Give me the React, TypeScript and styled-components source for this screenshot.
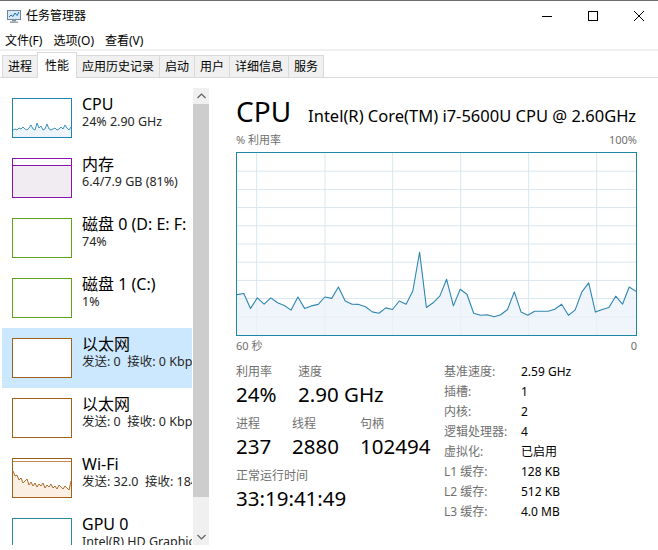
import styled, { createGlobalStyle } from "styled-components";

const GlobalStyle = createGlobalStyle`
  html, body {
    margin: 0;
    padding: 0;
    background: #ffffff;
    overflow: hidden;
  }
  body {
    font-family: "Noto Sans", "Noto Sans CJK SC", sans-serif;
    color: #000;
  }
`;

const cpuHistory = [
  22.2, 22.8, 14.6, 20.4, 16.9, 20.4, 17.7, 16.2, 13.7, 20.9, 14.6, 16.0, 16.8,
  20.9, 20.1, 26.4, 18.6, 16.9, 16.8, 15.5, 12.7, 11.9, 14.9, 14.0, 18.7, 16.9,
  24.2, 45.5, 15.1, 17.7, 21.5, 30.6, 16.0, 25.1, 22.4, 11.9, 10.8, 11.1, 10.0,
  11.1, 14.0, 23.7, 12.7, 10.8, 13.1, 13.1, 13.1, 14.2, 16.9, 10.8, 13.7, 23.7,
  28.6, 12.6, 14.0, 15.1, 21.3, 16.9, 26.4, 24.0,
];

const gridX = [19.7, 88, 155.7, 223.7, 291.7, 359.7];

type Kind = "cpu" | "mem" | "disk" | "eth" | "wifi" | "gpu";

const resources: { kind: Kind; name: string; sub: string; selected?: boolean }[] = [
  { kind: "cpu", name: "CPU", sub: "24% 2.90 GHz" },
  { kind: "mem", name: "内存", sub: "6.4/7.9 GB (81%)" },
  { kind: "disk", name: "磁盘 0 (D: E: F:", sub: "74%" },
  { kind: "disk", name: "磁盘 1 (C:)", sub: "1%" },
  { kind: "eth", name: "以太网", sub: "发送: 0  接收: 0 Kbps", selected: true },
  { kind: "eth", name: "以太网", sub: "发送: 0  接收: 0 Kbps" },
  { kind: "wifi", name: "Wi-Fi", sub: "发送: 32.0  接收: 184 Kbps" },
  { kind: "gpu", name: "GPU 0", sub: "Intel(R) HD Graphics 5500" },
];

const borderColors: Record<Kind, string> = {
  cpu: "#1f84b4",
  mem: "#8b12ae",
  disk: "#5ea21c",
  eth: "#a2601a",
  wifi: "#a2601a",
  gpu: "#2a8a9c",
};

const tabs = ["进程", "性能", "应用历史记录", "启动", "用户", "详细信息", "服务"];

const rightStats = [
  ["基准速度:", "2.59 GHz"],
  ["插槽:", "1"],
  ["内核:", "2"],
  ["逻辑处理器:", "4"],
  ["虚拟化:", "已启用"],
  ["L1 缓存:", "128 KB"],
  ["L2 缓存:", "512 KB"],
  ["L3 缓存:", "4.0 MB"],
];

const Window = styled.div`
  width: 662px;
  height: 550px;
  box-sizing: border-box;
  border-top: 1px solid #6e6e6e;
  display: flex;
  flex-direction: column;
  overflow: hidden;
`;

const TitleBar = styled.div`
  height: 29px;
  display: flex;
  align-items: center;
  flex-shrink: 0;
`;

const AppIcon = styled.svg`
  margin-left: 6px;
  flex-shrink: 0;
`;

const TitleText = styled.span`
  margin-left: 4px;
  font-size: 12px;
  line-height: 16px;
  flex: 1;
`;

const WinButton = styled.div`
  width: 46px;
  height: 29px;
  display: flex;
  align-items: center;
  justify-content: center;
`;

const MenuBar = styled.div`
  height: 19px;
  padding: 3px 0 0 5px;
  box-sizing: border-box;
  display: flex;
  align-items: center;
  gap: 11px;
  font-size: 12px;
  flex-shrink: 0;
`;

const MenuItem = styled.span`
  line-height: 16px;
`;

const Separator = styled.div`
  height: 2px;
  background: #f0f0f0;
  flex-shrink: 0;
`;

const TabStrip = styled.div`
  height: 26px;
  box-sizing: content-box;
  border-bottom: 1px solid #d9d9d9;
  display: flex;
  align-items: flex-end;
  padding-left: 2px;
  flex-shrink: 0;
`;

const Tab = styled.div<{ $active?: boolean }>`
  height: ${({ $active }) => ($active ? "26px" : "22px")};
  margin-bottom: ${({ $active }) => ($active ? "-1px" : "0")};
  margin-left: -1px;
  padding: 0 ${({ $active }) => ($active ? "7px" : "5px")};
  border: 1px solid #d9d9d9;
  border-bottom: none;
  background: ${({ $active }) => ($active ? "#ffffff" : "#f0f0f0")};
  position: relative;
  z-index: ${({ $active }) => ($active ? 1 : 0)};
  box-sizing: border-box;
  display: flex;
  align-items: center;
  font-size: 12px;
  line-height: 16px;
  &:first-child {
    margin-left: 0;
  }
`;

const Body = styled.div`
  flex: 1;
  display: flex;
  min-height: 0;
`;

const LeftPane = styled.div`
  width: 210px;
  flex-shrink: 0;
  padding: 10px 0 5px;
  box-sizing: border-box;
  display: flex;
`;

const ResourceList = styled.div`
  width: 193px;
  padding-left: 2px;
  box-sizing: border-box;
  display: flex;
  flex-direction: column;
  overflow: hidden;
`;

const ResourceRow = styled.div<{ $selected?: boolean }>`
  height: 60px;
  width: 190px;
  flex-shrink: 0;
  box-sizing: border-box;
  padding: 10px 0 0 10px;
  display: flex;
  align-items: flex-start;
  background: ${({ $selected }) => ($selected ? "#cce8ff" : "transparent")};
  overflow: hidden;
`;

const Thumb = styled.div<{ $color: string }>`
  width: 60px;
  height: 40px;
  flex-shrink: 0;
  box-sizing: border-box;
  border: 1px solid ${({ $color }) => $color};
  background: #ffffff;
  display: flex;
`;

const ResourceText = styled.div`
  margin: -4px 0 0 10px;
  white-space: pre;
  min-width: 0;
`;

const ResourceName = styled.div`
  font-size: 16px;
  line-height: 20px;
  color: #000;
`;

const ResourceSub = styled.div`
  font-size: 12.5px;
  line-height: 16px;
  color: #262626;
`;

const ScrollBar = styled.div`
  width: 16px;
  background: #f0f0f0;
  display: flex;
  flex-direction: column;
  align-items: stretch;
`;

const ScrollArrow = styled.div`
  height: 16px;
  display: flex;
  align-items: center;
  justify-content: center;
  flex-shrink: 0;
`;

const ScrollThumb = styled.div`
  height: 393px;
  background: #cdcdcd;
  flex-shrink: 0;
`;

const ScrollTrack = styled.div`
  flex: 1;
`;

const RightPane = styled.div`
  flex: 1;
  padding: 15px 25px 0 26px;
  display: flex;
  flex-direction: column;
  min-width: 0;
`;

const Header = styled.div`
  height: 36px;
  display: flex;
  align-items: baseline;
  white-space: nowrap;
`;

const HeaderTitle = styled.span`
  font-size: 28px;
  line-height: 36px;
`;

const HeaderModel = styled.span`
  margin-left: 17px;
  font-size: 16.5px;
  line-height: 20px;
`;

const AxisRow = styled.div<{ $top: number }>`
  margin-top: ${({ $top }) => $top}px;
  display: flex;
  justify-content: space-between;
  font-size: 11px;
  line-height: 14px;
  color: #707070;
`;

const ChartBox = styled.div`
  margin-top: 5px;
  height: 184px;
  box-sizing: border-box;
  border: 1px solid #1f86a6;
  display: flex;
`;

const Stats = styled.div`
  margin-top: 11px;
  display: flex;
`;

const MainStats = styled.div`
  width: 208px;
  flex-shrink: 0;
  display: flex;
  flex-direction: column;
  gap: 8px;
`;

const StatRow = styled.div`
  display: flex;
`;

const StatGroup = styled.div<{ $w?: number }>`
  width: ${({ $w }) => ($w ? `${$w}px` : "auto")};
  flex-shrink: 0;
  white-space: nowrap;
`;

const StatLabel = styled.div`
  font-size: 12px;
  line-height: 16px;
  color: #707070;
`;

const StatValue = styled.div`
  font-size: 20.5px;
  line-height: 28px;
  color: #000;
`;

const SpecGrid = styled.div`
  margin-top: -2px;
  display: grid;
  grid-template-columns: 77px auto;
  grid-auto-rows: 20px;
  align-items: center;
  font-size: 12px;
  line-height: 16px;
  white-space: nowrap;
`;

const SpecLabel = styled.span`
  color: #707070;
`;

const SpecValue = styled.span`
  color: #000;
`;

function ThumbGraph({ kind }: { kind: Kind }) {
  if (kind === "cpu") {
    const ys = [31, 30, 31, 29, 30, 28, 30, 31, 29, 26, 30, 31, 24, 29, 27, 31, 30, 25, 30, 31, 30, 29, 31, 30, 28, 30, 26, 29, 31, 28];
    const pts = ys.map((y, i) => `${(i * 58) / (ys.length - 1)},${y}`).join(" ");
    return (
      <svg width="58" height="38" viewBox="0 0 58 38">
        <polygon points={`0,38 ${pts} 58,38`} fill="#eef5fa" />
        <polyline points={pts} fill="none" stroke="#2b86b4" strokeWidth="0.9" />
      </svg>
    );
  }
  if (kind === "mem") {
    return (
      <svg width="58" height="38" viewBox="0 0 58 38">
        <rect x="0" y="7" width="58" height="31" fill="#f1ecf2" />
        <line x1="0" y1="6.5" x2="58" y2="6.5" stroke="#8b12ae" strokeWidth="1" />
      </svg>
    );
  }
  if (kind === "wifi") {
    const ys = [12, 17, 16, 21, 19, 24, 22, 20, 26, 23, 27, 24, 28, 25, 27, 24, 29, 26, 28, 25, 29, 27, 30, 26, 28, 30, 27, 29, 31, 22];
    const pts = ys.map((y, i) => `${(i * 58) / (ys.length - 1)},${y}`).join(" ");
    return (
      <svg width="58" height="38" viewBox="0 0 58 38">
        <polygon points={`0,38 ${pts} 58,38`} fill="#fbeee2" />
        <line x1="0" y1="2.5" x2="58" y2="2.5" stroke="#c08850" strokeWidth="1" />
        <polyline points={pts} fill="none" stroke="#a2601a" strokeWidth="0.9" />
      </svg>
    );
  }
  return null;
}

function CpuChart() {
  const w = 399;
  const h = 182;
  const pts = cpuHistory
    .map((v, i) => `${((i * w) / (cpuHistory.length - 1)).toFixed(1)},${(h - (v / 100) * h).toFixed(1)}`)
    .join(" ");
  return (
    <svg width={w} height={h} viewBox={`0 0 ${w} ${h}`}>
      {Array.from({ length: 9 }, (_, k) => (
        <line key={`h${k}`} x1="0" x2={w} y1={(k + 1) * 18.2} y2={(k + 1) * 18.2} stroke="#d9e6ef" strokeWidth="1" />
      ))}
      {gridX.map((x) => (
        <line key={`v${x}`} x1={x} x2={x} y1="0" y2={h} stroke="#d9e6ef" strokeWidth="1" />
      ))}
      <polygon points={`0,${h} ${pts} ${w},${h}`} fill="#e9f2f9" fillOpacity="0.75" />
      <polyline points={pts} fill="none" stroke="#2f86b0" strokeWidth="1.1" strokeLinejoin="round" />
    </svg>
  );
}

export default function App() {
  return (
    <>
      <GlobalStyle />
      <Window>
        <TitleBar>
          <AppIcon width="16" height="16" viewBox="0 0 16 16">
            <rect x="1.5" y="2.5" width="13" height="9" fill="#d6e8f6" stroke="#6f8496" />
            <polyline points="3,9 5,7 7,8.5 9,5 11,7.5 13,4" fill="none" stroke="#1f6fb0" strokeWidth="1" />
            <rect x="6" y="11.5" width="4" height="2" fill="#8a96a0" />
            <rect x="4" y="13.5" width="8" height="1.5" fill="#9aa4ad" />
          </AppIcon>
          <TitleText>任务管理器</TitleText>
          <WinButton>
            <svg width="10" height="10" viewBox="0 0 10 10">
              <line x1="0" y1="5.5" x2="10" y2="5.5" stroke="#000" strokeWidth="1" />
            </svg>
          </WinButton>
          <WinButton>
            <svg width="10" height="10" viewBox="0 0 10 10">
              <rect x="0.5" y="0.5" width="9" height="9" fill="none" stroke="#000" strokeWidth="1" />
            </svg>
          </WinButton>
          <WinButton>
            <svg width="10" height="10" viewBox="0 0 10 10">
              <path d="M0 0 L10 10 M10 0 L0 10" stroke="#000" strokeWidth="1" />
            </svg>
          </WinButton>
        </TitleBar>
        <MenuBar>
          <MenuItem>文件(F)</MenuItem>
          <MenuItem>选项(O)</MenuItem>
          <MenuItem>查看(V)</MenuItem>
        </MenuBar>
        <Separator />
        <TabStrip>
          {tabs.map((t) => (
            <Tab key={t} $active={t === "性能"}>
              {t}
            </Tab>
          ))}
        </TabStrip>
        <Body>
          <LeftPane>
            <ResourceList>
              {resources.map((r, i) => (
                <ResourceRow key={i} $selected={r.selected}>
                  <Thumb $color={borderColors[r.kind]}>
                    <ThumbGraph kind={r.kind} />
                  </Thumb>
                  <ResourceText>
                    <ResourceName>{r.name}</ResourceName>
                    <ResourceSub>{r.sub}</ResourceSub>
                  </ResourceText>
                </ResourceRow>
              ))}
            </ResourceList>
            <ScrollBar>
              <ScrollArrow>
                <svg width="9" height="6" viewBox="0 0 9 6">
                  <polyline points="0.5,5 4.5,1 8.5,5" fill="none" stroke="#606060" strokeWidth="1.2" />
                </svg>
              </ScrollArrow>
              <ScrollThumb />
              <ScrollTrack />
              <ScrollArrow>
                <svg width="9" height="6" viewBox="0 0 9 6">
                  <polyline points="0.5,1 4.5,5 8.5,1" fill="none" stroke="#606060" strokeWidth="1.2" />
                </svg>
              </ScrollArrow>
            </ScrollBar>
          </LeftPane>
          <RightPane>
            <Header>
              <HeaderTitle>CPU</HeaderTitle>
              <HeaderModel>Intel(R) Core(TM) i7-5600U CPU @ 2.60GHz</HeaderModel>
            </Header>
            <AxisRow $top={4}>
              <span>% 利用率</span>
              <span>100%</span>
            </AxisRow>
            <ChartBox>
              <CpuChart />
            </ChartBox>
            <AxisRow $top={3}>
              <span>60 秒</span>
              <span>0</span>
            </AxisRow>
            <Stats>
              <MainStats>
                <StatRow>
                  <StatGroup $w={62}>
                    <StatLabel>利用率</StatLabel>
                    <StatValue>24%</StatValue>
                  </StatGroup>
                  <StatGroup>
                    <StatLabel>速度</StatLabel>
                    <StatValue>2.90 GHz</StatValue>
                  </StatGroup>
                </StatRow>
                <StatRow>
                  <StatGroup $w={56}>
                    <StatLabel>进程</StatLabel>
                    <StatValue>237</StatValue>
                  </StatGroup>
                  <StatGroup $w={68}>
                    <StatLabel>线程</StatLabel>
                    <StatValue>2880</StatValue>
                  </StatGroup>
                  <StatGroup>
                    <StatLabel>句柄</StatLabel>
                    <StatValue>102494</StatValue>
                  </StatGroup>
                </StatRow>
                <StatRow>
                  <StatGroup>
                    <StatLabel>正常运行时间</StatLabel>
                    <StatValue>33:19:41:49</StatValue>
                  </StatGroup>
                </StatRow>
              </MainStats>
              <SpecGrid>
                {rightStats.map(([label, value]) => (
                  <>
                    <SpecLabel key={`l-${label}`}>{label}</SpecLabel>
                    <SpecValue key={`v-${label}`}>{value}</SpecValue>
                  </>
                ))}
              </SpecGrid>
            </Stats>
          </RightPane>
        </Body>
      </Window>
    </>
  );
}
